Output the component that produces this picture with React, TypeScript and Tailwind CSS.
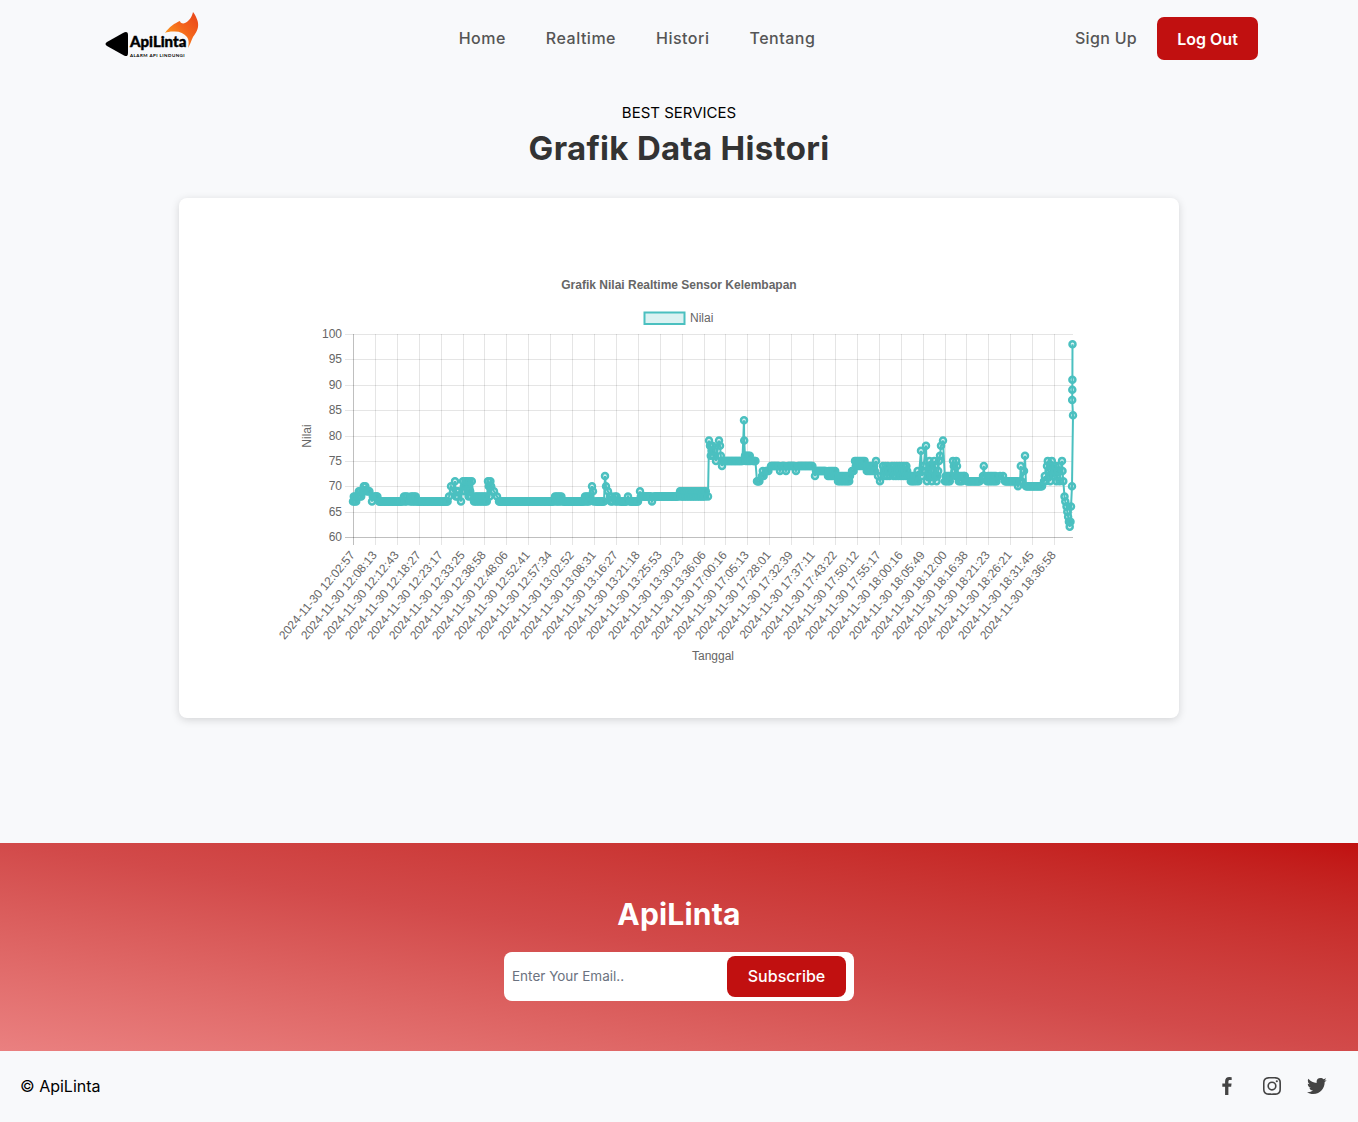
import { BiLogoFacebook, BiLogoInstagram, BiLogoTwitter } from 'react-icons/bi';

const times = [
  '12:02:57', '12:08:13', '12:12:43', '12:18:27', '12:23:17', '12:33:25', '12:38:58', '12:48:06', '12:52:41', '12:57:34', '13:02:52',
  '13:08:31', '13:16:27', '13:21:18', '13:25:53', '13:30:23', '13:36:06', '17:00:16', '17:05:13', '17:28:01', '17:32:39', '17:37:11',
  '17:43:22', '17:50:12', '17:55:17', '18:00:16', '18:05:49', '18:12:00', '18:16:38', '18:21:23', '18:26:21', '18:31:45', '18:36:58',
];

// [from x, to x, values to cycle through]
const segments: [number, number, number[]][] = [
  [353, 357, [67, 68]], [358, 362, [68, 69]], [363, 366, [69, 70]], [367, 370, [69]], [372, 373, [67, 68]], [375, 378, [68]],
  [379, 403, [67]], [404, 408, [68, 67]], [410, 410, [67]], [411, 417, [68, 67]], [418, 448, [67]],
  [449, 449, [68]], [451, 451, [70]], [453, 453, [69]], [455, 455, [71]], [456, 459, [68, 69]], [461, 461, [67]],
  [463, 466, [71, 70, 69]], [467, 472, [71, 69, 68]], [474, 487, [67, 68]], [488, 492, [71, 70, 68]], [494, 494, [69]], [497, 497, [68]],
  [499, 554, [67]], [555, 562, [68, 67]], [563, 584, [67]], [585, 590, [68, 67]], [592, 592, [70]], [593, 594, [69, 67]], [596, 604, [67]],
  [605, 605, [72]], [606, 606, [70]], [608, 608, [69]], [610, 613, [68, 67]], [615, 618, [68, 67]], [620, 627, [67]], [628, 628, [68]],
  [630, 638, [67]], [640, 641, [69, 68]], [643, 651, [68]], [652, 652, [67]], [654, 678, [68]],
  [680, 696, [69, 68]], [697, 706, [68, 69]], [708, 708, [68]],
  [709, 709, [79]], [710, 714, [78, 76, 77]], [716, 716, [75]], [719, 719, [79]], [720, 721, [78, 76, 77]], [722, 722, [74]],
  [724, 743, [75]], [744, 744, [83]], [744.2, 744.2, [79]], [745, 751, [76, 75]], [753, 756, [75]],
  [757, 760, [71]], [762, 764, [72, 73]], [766, 769, [73]], [771, 779, [74]], [780, 780, [73]], [782, 785, [74]], [786, 786, [73]],
  [788, 795, [74]], [796, 796, [73]], [798, 813, [74]], [815, 815, [72]], [816, 826, [73]], [828, 836, [72, 73]],
  [838, 850, [71, 72]], [852, 854, [73]], [855, 865, [75, 74]], [866, 875, [74, 73]], [876, 876, [75]], [878, 878, [72]], [880, 880, [71]],
  [883, 890, [74, 73, 72]], [892, 908, [74, 73, 72]], [910, 915, [72, 71]], [916, 919, [71, 72, 73]], [921, 921, [77]], [922, 924, [72, 73, 74]], [926, 926, [78]],
  [927, 939, [71, 72, 73, 75, 74, 72]], [940, 940, [76]], [941, 941, [78]], [943, 943, [79]], [945, 951, [71, 72]], [953, 957, [75, 74, 73, 72]],
  [958, 963, [72, 71]], [964, 965, [72]], [967, 980, [71]], [983, 985, [72, 74]], [987, 997, [71, 72]], [1000, 1000, [72]], [1003, 1003, [72]],
  [1005, 1017, [71]], [1018, 1018, [70]], [1020, 1022, [71, 74]], [1024, 1024, [73]], [1025, 1025, [76]], [1026, 1042, [70]],
  [1044, 1046, [71, 72]], [1047, 1052, [74, 75, 73, 72, 71]], [1054, 1060, [72, 73, 74, 71]], [1062, 1062, [75]],
  [1062.5, 1064, [73, 71, 70, 69]], [1064.5, 1066, [68, 67, 66, 65]], [1066.5, 1071, [66, 65, 64, 63, 62, 63, 64, 65, 62, 63]],
  [1071, 1071, [66]], [1072, 1072, [70]], [1073, 1073, [84]],
  [1072.2, 1072.2, [87]], [1072.3, 1072.3, [89]], [1072.4, 1072.4, [91]], [1072.5, 1072.5, [98]],
];

const yOf = (v: number) => 537 - (v - 60) * 5.075;

const points: [number, number][] = segments.flatMap(([from, to, values]) => {
  const out: [number, number][] = [];
  let i = 0;
  for (let x = from; x <= to; x += 0.8) {
    out.push([x, yOf(values[i % values.length])]);
    i++;
  }
  return out;
});

const yTicks = [100, 95, 90, 85, 80, 75, 70, 65, 60];

function Chart() {
  return (
    <svg viewBox="179 198 1000 520" className="block w-full h-full" fontFamily="'Liberation Sans', Arial, sans-serif" fill="#666" fontSize="12">
      <text x="679" y="289" textAnchor="middle" fontWeight="700">Grafik Nilai Realtime Sensor Kelembapan</text>
      <rect x="644.5" y="312.5" width="40" height="11.5" fill="#4bc0c033" stroke="#4bc0c0" strokeWidth="2" />
      <text x="690" y="322">Nilai</text>
      <text transform="translate(311 436) rotate(-90)" textAnchor="middle">Nilai</text>
      <text x="713" y="660" textAnchor="middle">Tanggal</text>

      {yTicks.map((v) => {
        const y = Math.round(yOf(v)) + 0.5;
        return (
          <g key={v}>
            <line x1="345" x2="1073" y1={y} y2={y} stroke={v === 60 ? '#00000040' : '#0000001a'} />
            <text x="342" y={y + 3.5} textAnchor="end">{v}</text>
          </g>
        );
      })}
      {times.map((t, i) => {
        const x = Math.round(353 + i * 21.91) + 0.5;
        return (
          <g key={t}>
            <line x1={x} x2={x} y1="334" y2="545" stroke={i === 0 ? '#00000040' : '#0000001a'} />
            <text transform={`translate(${x + 2} 555.5) rotate(-50)`} textAnchor="end">2024-11-30 {t}</text>
          </g>
        );
      })}

      <polyline points={points.map((p) => p.join(',')).join(' ')} fill="none" stroke="#4bc0c0" strokeWidth="2" />
      {points.map(([x, y], i) => (
        <circle key={i} cx={x} cy={y} r="3" fill="#4bc0c033" stroke="#4bc0c0" strokeWidth="2.5" />
      ))}
    </svg>
  );
}

function Logo() {
  return (
    <div className="relative w-[94px] h-[50px] shrink-0 -mt-[3px]">
      <svg viewBox="0 0 94 50" className="absolute inset-0 w-full h-full">
        <defs>
          <linearGradient id="flame" x1="0" y1="1" x2="1" y2="0">
            <stop offset="0" stopColor="#ffb21e" />
            <stop offset="0.55" stopColor="#f4661c" />
            <stop offset="1" stopColor="#e8431a" />
          </linearGradient>
        </defs>
        <path d="M23 23 L23 41 Q23 45.5 19 43.5 L2 34 Q-1 32 2 30 L18 21 Q23 18.5 23 23 Z" fill="#000" />
        <path d="M60 21 C64 15 70 11 75 9 C75 11 78 12 80 11 C84 9 87 5 88 0 C91 4 94 10 93 15 C92 20 90 22 88 25 C86 29 85 33 83 36 C84 31 84 28 82 25 C79 21 74 19 68 19.5 C65 19.5 62 20 60 21 Z" fill="url(#flame)" />
      </svg>
      <span className="absolute left-[25px] top-[19px] text-[15px] leading-[20px] font-black text-black font-['Lato',sans-serif] [-webkit-text-stroke:0.4px_black]">ApiLinta</span>
      <span className="absolute left-[25px] top-[40px] text-[4.5px] leading-[7px] font-bold text-black whitespace-nowrap font-['Lato',sans-serif] [letter-spacing:0.45px]">ALARM API LINDUNGI</span>
    </div>
  );
}

export default function App() {
  return (
    <div className="min-h-[1122px] bg-[#f8f9fb] font-['Inter',sans-serif] flex flex-col">
      {/* Navbar */}
      <header className="h-[77px] pl-[105px] pr-[100px] flex items-center justify-between">
        <Logo />
        <nav className="flex gap-10 pb-[2px] text-[16px] font-medium text-[#555] tracking-[0.5px]">
          <a>Home</a>
          <a>Realtime</a>
          <a>Histori</a>
          <a>Tentang</a>
        </nav>
        <div className="flex items-center gap-5">
          <a className="pb-[2px] text-[16px] font-medium text-[#555] tracking-[0.3px]">Sign Up</a>
          <button className="w-[101px] h-[43px] rounded-[7px] bg-[#c11010] text-white text-[16px] font-semibold">Log Out</button>
        </div>
      </header>

      {/* Heading */}
      <div className="pt-[25px] text-center">
        <p className="text-[15px] leading-[22px] text-black">BEST SERVICES</p>
        <h1 className="text-[33px] leading-[49px] font-bold text-[#333] tracking-[0.3px]">Grafik Data Histori</h1>
      </div>

      {/* Chart card */}
      <main className="mt-[25px] mx-auto w-[1000px] h-[520px] bg-white rounded-lg shadow-[0_2px_8px_rgba(0,0,0,0.15)]">
        <Chart />
      </main>

      {/* Subscribe */}
      <section className="mt-[125px] h-[208px] bg-linear-to-tr from-[#ea8080] via-[#d24a4a] to-[#c01010] flex flex-col items-center pt-[50px]">
        <h2 className="text-[30px] leading-[42px] font-bold text-white tracking-[0.2px]">ApiLinta</h2>
        <form className="mt-[17px] w-[350px] h-[49px] bg-white rounded-lg pl-2 pr-2 flex items-center justify-between">
          <span className="text-[13.5px] text-[#6b7280]">Enter Your Email..</span>
          <button type="button" className="w-[119px] h-[41px] pb-[2px] rounded-lg bg-[#c11010] text-white text-[16px] font-medium">Subscribe</button>
        </form>
      </section>

      {/* Bottom bar */}
      <footer className="h-[71px] pl-5 pr-[29px] pb-[2px] flex items-center justify-between">
        <p className="text-[16px] text-black">© ApiLinta</p>
        <div className="flex items-center gap-[21px] text-[#444] text-[24px]">
          <BiLogoFacebook />
          <BiLogoInstagram />
          <BiLogoTwitter />
        </div>
      </footer>
    </div>
  );
}
